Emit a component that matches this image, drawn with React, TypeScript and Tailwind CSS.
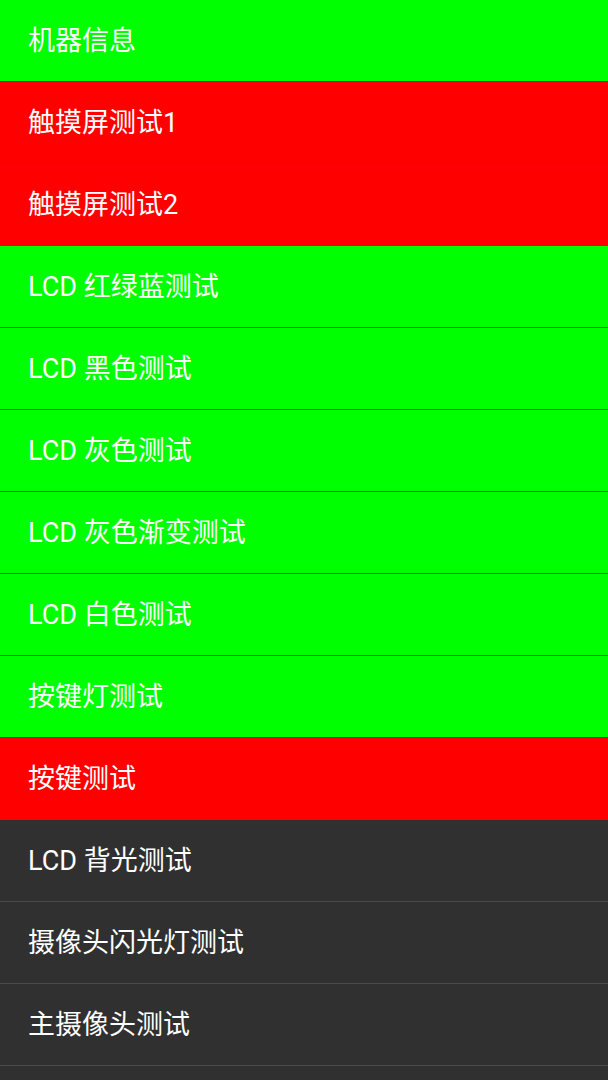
const items: { label: string; state: "pass" | "fail" | "none" }[] = [
  { label: "机器信息", state: "pass" },
  { label: "触摸屏测试1", state: "fail" },
  { label: "触摸屏测试2", state: "fail" },
  { label: "LCD 红绿蓝测试", state: "pass" },
  { label: "LCD 黑色测试", state: "pass" },
  { label: "LCD 灰色测试", state: "pass" },
  { label: "LCD 灰色渐变测试", state: "pass" },
  { label: "LCD 白色测试", state: "pass" },
  { label: "按键灯测试", state: "pass" },
  { label: "按键测试", state: "fail" },
  { label: "LCD 背光测试", state: "none" },
  { label: "摄像头闪光灯测试", state: "none" },
  { label: "主摄像头测试", state: "none" },
]

export default function App() {
  return (
    <div
      className="w-[608px] h-[1080px] overflow-hidden bg-[#303030]"
      style={{ fontFamily: 'Roboto, "Noto Sans CJK SC", sans-serif' }}
    >
      {items.map((item) => (
        <div key={item.label}>
          <div
            className={
              "h-[81px] flex items-center pl-[28px] pt-[2px] text-[27px] text-white " +
              (item.state === "pass"
                ? "bg-[#00ff00]"
                : item.state === "fail"
                ? "bg-[#ff0000]"
                : "bg-[#303030]")
            }
          >
            {item.label}
          </div>
          <div className="h-px bg-[#4a4a4a]" />
        </div>
      ))}
    </div>
  )
}
